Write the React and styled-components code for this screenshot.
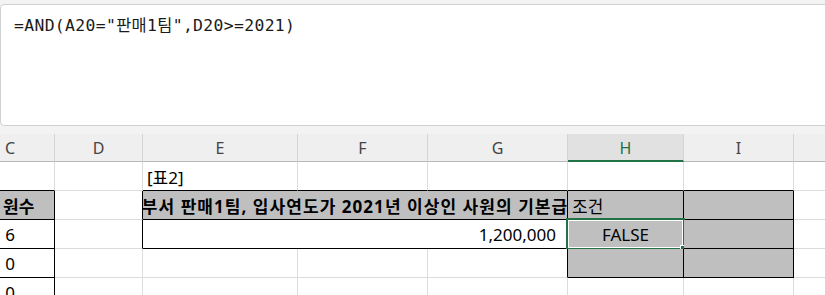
import styled, { createGlobalStyle } from "styled-components";

const GlobalStyle = createGlobalStyle`
  html, body {
    margin: 0;
    padding: 0;
    background: #f3f3f3;
  }
  body {
    width: 825px;
    height: 295px;
    overflow: hidden;
  }
`;

const Page = styled.div`
  width: 825px;
  height: 295px;
  overflow: hidden;
  background: #f3f3f3;
  padding-top: 4px;
  box-sizing: border-box;
`;

const FormulaBar = styled.div`
  box-sizing: border-box;
  height: 122px;
  margin-right: -10px;
  background: #fff;
  border: 1px solid #d2d2d2;
  border-radius: 4px 0 0 4px;
  padding: 11px 13px;
  font-family: "DejaVu Sans Mono", "Noto Sans CJK KR", monospace;
  font-size: 16.4px;
  letter-spacing: 0.35px;
  line-height: 20px;
  color: #1a1a1a;
  white-space: pre;
`;

const Sheet = styled.div`
  margin-top: 8px;
  margin-left: -34px;
  display: grid;
  grid-template-columns: 89px 88px 155px 130px 140px 116px 110px 100px;
  grid-template-rows: 28px repeat(5, 29px);
  font-family: "Noto Sans", "Noto Sans CJK KR", sans-serif;
  font-size: 17px;
  color: #000;
`;

const ColHead = styled.div`
  box-sizing: border-box;
  display: flex;
  align-items: center;
  justify-content: center;
  background: ${(p) => (p.$active ? "#e1e1e1" : "#efefef")};
  border-right: 1px solid #d4d4d4;
  border-bottom: ${(p) => (p.$active ? "2px solid #217346" : "1px solid #b8b8b8")};
  color: ${(p) => (p.$active ? "#217346" : "#444")};
  font-size: 16px;
  padding-top: ${(p) => (p.$active ? "1px" : "0")};
`;

const Cell = styled.div`
  position: relative;
  box-sizing: border-box;
  grid-column: span ${(p) => p.$span || 1};
  display: flex;
  align-items: center;
  justify-content: ${(p) => p.$align || "flex-start"};
  padding: ${(p) =>
    p.$align === "flex-end" ? "0 11px 0 3px" : p.$pad ? `0 0 0 ${p.$pad}px` : "0 4px"};
  background: ${(p) => (p.$fill ? "#bfbfbf" : "#fff")};
  border-right: 1px solid ${(p) => (p.$br ? "#000" : "#dcdcdc")};
  border-bottom: 1px solid ${(p) => (p.$bb ? "#000" : "#dcdcdc")};
  font-weight: ${(p) => (p.$bold ? 700 : 400)};
  letter-spacing: ${(p) => (p.$wide ? "1.05px" : "normal")};
  white-space: nowrap;
  overflow: ${(p) => (p.$selected ? "visible" : "hidden")};
`;

const Selection = styled.div`
  position: absolute;
  left: -2px;
  top: -2px;
  right: -2px;
  bottom: -2px;
  border: 2px solid #217346;
  pointer-events: none;

  &::before {
    content: "";
    position: absolute;
    inset: 0;
    border: 1px solid #fff;
  }
`;

const FillHandle = styled.div`
  position: absolute;
  right: -5px;
  bottom: -5px;
  width: 6px;
  height: 6px;
  background: #217346;
  border: 1px solid #fff;
`;

const columns = ["C", "D", "E", "F", "G", "H", "I", ""];

export default function App() {
  return (
    <Page>
      <GlobalStyle />
      <FormulaBar>{'=AND(A20="판매1팀",D20>=2021)'}</FormulaBar>
      <Sheet>
        {columns.map((c) => (
          <ColHead key={c || "J"} $active={c === "H"}>
            {c}
          </ColHead>
        ))}

        {/* row 1 */}
        <Cell $bb />
        <Cell />
        <Cell $bb>[표2]</Cell>
        <Cell $bb />
        <Cell $bb />
        <Cell $bb />
        <Cell $bb />
        <Cell />

        {/* row 2 */}
        <Cell $fill $bold $br $bb $pad={37}>원수</Cell>
        <Cell $br />
        <Cell $span={3} $fill $bold $br $bb $wide $align="center">
          부서 판매1팀, 입사연도가 2021년 이상인 사원의 기본급
        </Cell>
        <Cell $fill $br $bb>조건</Cell>
        <Cell $fill $br $bb />
        <Cell />

        {/* row 3 */}
        <Cell $br $bb $align="center">6</Cell>
        <Cell $br />
        <Cell $span={3} $br $bb $align="flex-end">1,200,000</Cell>
        <Cell $fill $br $bb $align="center" $selected>
          FALSE
          <Selection />
          <FillHandle />
        </Cell>
        <Cell $fill $br $bb />
        <Cell />

        {/* row 4 */}
        <Cell $br $bb $align="center">0</Cell>
        <Cell />
        <Cell />
        <Cell />
        <Cell $br />
        <Cell $fill $br $bb />
        <Cell $fill $br $bb />
        <Cell />

        {/* row 5 */}
        <Cell $br $align="center">0</Cell>
        <Cell />
        <Cell />
        <Cell />
        <Cell />
        <Cell />
        <Cell />
        <Cell />
      </Sheet>
    </Page>
  );
}
